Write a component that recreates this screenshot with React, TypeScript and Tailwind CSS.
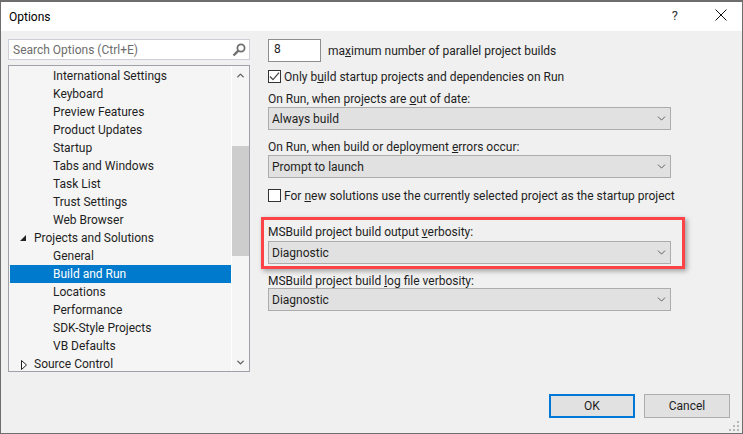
import { ChevronDown, ChevronUp } from 'lucide-react';

const font = 'font-["Roboto",sans-serif]';

const treeRows = [
  { label: 'International Settings', depth: 2 },
  { label: 'Keyboard', depth: 2 },
  { label: 'Preview Features', depth: 2 },
  { label: 'Product Updates', depth: 2 },
  { label: 'Startup', depth: 2 },
  { label: 'Tabs and Windows', depth: 2 },
  { label: 'Task List', depth: 2 },
  { label: 'Trust Settings', depth: 2 },
  { label: 'Web Browser', depth: 2 },
  { label: 'Projects and Solutions', depth: 1, arrow: 'open' },
  { label: 'General', depth: 2 },
  { label: 'Build and Run', depth: 2, selected: true },
  { label: 'Locations', depth: 2 },
  { label: 'Performance', depth: 2 },
  { label: 'SDK-Style Projects', depth: 2 },
  { label: 'VB Defaults', depth: 2 },
  { label: 'Source Control', depth: 1, arrow: 'closed' },
];

function TreeArrow({ type }: { type?: string }) {
  if (type === 'open') {
    return (
      <svg width="8" height="8" viewBox="0 0 8 8" className="absolute left-[9px] top-[5px]">
        <path d="M7 1v6H1z" fill="#222222" />
      </svg>
    );
  }
  if (type === 'closed') {
    return (
      <svg width="8" height="10" viewBox="0 0 8 10" className="absolute left-[10px] top-[5px]">
        <path d="M1.5 .5l5 4.5-5 4.5z" fill="#ffffff" stroke="#222222" />
      </svg>
    );
  }
  return null;
}

function Tree() {
  return (
    <div className="flex h-[307px] border border-[#a0a0a8] bg-[#f5f5f5] mt-[5px]">
      <div className="w-[222px] pt-[1px] pl-[1px] overflow-hidden">
        {treeRows.map((row) => (
          <div
            key={row.label}
            className={`relative h-[18px] leading-[18px] text-[12px] whitespace-nowrap ${row.depth === 2 ? 'pl-[43px]' : 'pl-[24px]'} ${row.selected ? 'bg-[#007acc] text-white' : 'text-[#1e1e1e]'}`}
          >
            <TreeArrow type={row.arrow} />
            {row.label}
          </div>
        ))}
      </div>
      <div className="w-[18px] bg-[#f5f5f5] border-l border-white flex flex-col items-center justify-between">
        <div className="h-[18px] flex items-center justify-center">
          <ChevronUp size={11} strokeWidth={3} color="#606060" />
        </div>
        <div className="w-full h-[110px] bg-[#cdcdcd] mt-[62px] mb-auto" />
        <div className="h-[18px] flex items-center justify-center">
          <ChevronDown size={11} strokeWidth={3} color="#606060" />
        </div>
      </div>
    </div>
  );
}

function Select({ value }: { value: string }) {
  return (
    <div className="h-[23px] w-[403px] border border-[#acacac] bg-[#e1e1e1] flex items-center justify-between pl-[3px] pr-[2px] text-[12px] text-[#1e1e1e]">
      <span>{value}</span>
      <ChevronDown size={13} strokeWidth={1.5} color="#444444" />
    </div>
  );
}

export default function App() {
  return (
    <div className={`${font} relative w-[743px] h-[434px] bg-[#f0f0f0] border border-[#6e6e6e] border-t-2 overflow-hidden text-[#1e1e1e]`}>
      <div className="h-[29px] bg-white flex items-center justify-between pl-[8px] text-[12px]">
        <span className="text-black">Options</span>
        <div className="flex items-center">
          <span className="text-[13px] text-[#333333] mr-[37px] -mt-[2px]">?</span>
          <svg width="12" height="12" viewBox="0 0 12 12" className="mr-[15px] -mt-[3px]">
            <path d="M.5 .5l11 11M11.5 .5l-11 11" stroke="#111111" strokeWidth="1" />
          </svg>
        </div>
      </div>

      <div className="flex pt-[8px] pl-[7px]">
        <div className="w-[242px]">
          <div className="h-[21px] border border-[#ccced8] bg-white flex items-center justify-between pl-[4px] pr-[3px] text-[12px] text-[#6d6d6d]">
            <span>Search Options (Ctrl+E)</span>
            <svg width="14" height="14" viewBox="0 0 14 14">
              <circle cx="9" cy="5" r="3.6" fill="none" stroke="#707070" strokeWidth="1.8" />
              <path d="M6.4 7.6L1.5 12.5" stroke="#707070" strokeWidth="2.4" />
            </svg>
          </div>
          <Tree />
        </div>

        <div className="ml-[18px] text-[12px] leading-[16px]">
          <div className="flex items-center">
            <div className="w-[53px] h-[23px] border border-[#8e8e8e] bg-white pl-[5px] leading-[19px]">8</div>
            <span className="ml-[7px]">
              ma<u>x</u>imum number of parallel project builds
            </span>
          </div>
          <div className="flex items-center mt-[6px]">
            <div className="w-[13px] h-[13px] border border-[#333333] bg-white flex items-center justify-center">
              <svg width="11" height="11" viewBox="0 0 11 11">
                <path d="M1 5.5l3 3.2 6-7" fill="none" stroke="#444444" strokeWidth="1.2" />
              </svg>
            </div>
            <span className="ml-[3px] h-[16px] pt-[1px]">
              Only b<u>u</u>ild startup projects and dependencies on Run
            </span>
          </div>
          <div className="mt-[7px]">
            On Run, when projects are <u>o</u>ut of date:
          </div>
          <Select value="Always build" />
          <div className="mt-[9px]">
            On Run, when build or deployment <u>e</u>rrors occur:
          </div>
          <Select value="Prompt to launch" />
          <div className="flex items-center mt-[9px]">
            <div className="w-[13px] h-[13px] border border-[#333333] bg-white" />
            <span className="ml-[3px] h-[16px] pt-[1px]">
              For <u>n</u>ew solutions use the currently selected project as the startup project
            </span>
          </div>
          <div className="mt-[21px] mb-[1px]">
            MSBuild project build output <u>v</u>erbosity:
          </div>
          <Select value="Diagnostic" />
          <div className="mt-[9px] -mb-[1px]">
            MSBuild project build <u>l</u>og file verbosity:
          </div>
          <Select value="Diagnostic" />
        </div>
      </div>

      {/* annotation box drawn over the form */}
      <div className="absolute left-[260px] top-[215px] w-[424px] h-[52px] border-[3px] border-[#fb4348] shadow-[2px_2px_5px_rgba(0,0,0,0.35)]" />

      <div className="absolute right-[12px] bottom-[15px] flex gap-[9px] text-[12px]">
        <div className="w-[86px] h-[24px] border-2 border-[#0078d7] bg-[#e1e1e1] flex items-center justify-center">OK</div>
        <div className="w-[86px] h-[24px] border border-[#adadad] bg-[#e1e1e1] flex items-center justify-center">Cancel</div>
      </div>

      <svg width="12" height="12" viewBox="0 0 12 12" className="absolute right-[1px] bottom-[1px]">
        <path d="M8 1h2v2H8zM4 5h2v2H4zM8 5h2v2H8zM0 9h2v2H0zM4 9h2v2H4zM8 9h2v2H8z" fill="#b8b8b8" />
      </svg>
    </div>
  );
}
